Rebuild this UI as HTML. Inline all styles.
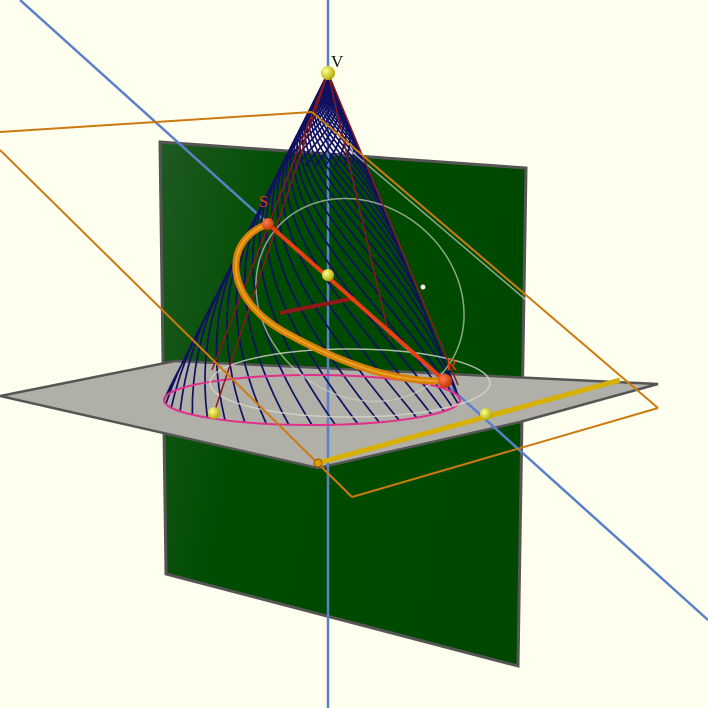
<!DOCTYPE html>
<html><head><style>html,body{margin:0;padding:0;background:#fffff0}svg{display:block}</style></head><body>
<svg id="s" width="708" height="708" viewBox="0 0 708 708" xmlns="http://www.w3.org/2000/svg">
<defs>
<linearGradient id="g" x1="0" y1="0" x2="1" y2="0.3"><stop offset="0" stop-color="#1f5a22"/><stop offset="0.35" stop-color="#004c00"/><stop offset="1" stop-color="#004800"/></linearGradient>
<radialGradient id="y" cx="0.35" cy="0.35" r="0.7"><stop offset="0" stop-color="#ffff90"/><stop offset="1" stop-color="#b0a800"/></radialGradient>
<radialGradient id="r" cx="0.35" cy="0.35" r="0.7"><stop offset="0" stop-color="#ff8050"/><stop offset="1" stop-color="#c03000"/></radialGradient>
</defs>
<rect width="708" height="708" fill="#fffff0"/>
<polygon points="160,142 526,168 518,666 166,574" fill="url(#g)" stroke="#555" stroke-width="3"/>
<polygon points="0,396 175,361 658,384 520,422 318,468" fill="#b0afa8" stroke="#555" stroke-width="2.5"/>
<line x1="328" y1="0" x2="328" y2="708" stroke="#5a80c8" stroke-width="2.5"/>
<line x1="20" y1="0" x2="708" y2="620" stroke="#5a80c8" stroke-width="2.5"/>
<g id="mesh" fill="none" stroke="#101060" stroke-width="1.7"></g>
<ellipse cx="312" cy="400" rx="148" ry="25" fill="none" stroke="#e0308a" stroke-width="2"/>
<ellipse cx="350" cy="383" rx="140" ry="34" fill="none" stroke="#d8d8d0" stroke-width="1.5" opacity="0.8"/>
<ellipse cx="360" cy="300" rx="95" ry="110" transform="rotate(-50 360 300)" fill="none" stroke="#c8d0c0" stroke-width="1.5" opacity="0.7"/>
<line x1="350" y1="150" x2="526" y2="300" stroke="#c8d0c0" stroke-width="1.5" opacity="0.7"/>
<g stroke="#8a1a1a" stroke-width="1.5" fill="none">
<line x1="328" y1="73" x2="214" y2="413"/><line x1="328" y1="73" x2="458" y2="385"/>
<line x1="328" y1="73" x2="212" y2="370"/><line x1="328" y1="73" x2="390" y2="340"/>
</g>
<line x1="0" y1="150" x2="352" y2="497" stroke="#cc7a10" stroke-width="2"/>
<line x1="0" y1="132" x2="312" y2="112" stroke="#cc7a10" stroke-width="2"/>
<line x1="312" y1="112" x2="658" y2="408" stroke="#cc7a10" stroke-width="2"/>
<line x1="658" y1="408" x2="352" y2="497" stroke="#cc7a10" stroke-width="2"/>
<line x1="280" y1="313" x2="355" y2="298" stroke="#901818" stroke-width="4"/>
<path d="M268,224 C222,240 222,300 290,335 C350,368 400,382 445,381" fill="none" stroke="#d88000" stroke-width="7"/>
<path d="M268,224 C222,240 222,300 290,335 C350,368 400,382 445,381" fill="none" stroke="#f0b040" stroke-width="2" opacity="0.7"/>
<line x1="268" y1="224" x2="445" y2="381" stroke="#e84010" stroke-width="4"/>
<line x1="318" y1="463" x2="620" y2="380" stroke="#d8b000" stroke-width="5"/>
<circle cx="328" cy="73" r="7" fill="url(#y)"/>
<circle cx="328" cy="275" r="6" fill="url(#y)"/>
<circle cx="214" cy="413" r="6" fill="url(#y)"/>
<circle cx="486" cy="414" r="6" fill="url(#y)"/>
<circle cx="268" cy="224" r="6" fill="url(#r)"/>
<circle cx="445" cy="381" r="7" fill="url(#r)"/>
<circle cx="318" cy="463" r="4" fill="#d8a000" stroke="#a05000"/>
<circle cx="423" cy="287" r="2.5" fill="#eee"/>
<text x="331" y="67" font-family="Liberation Serif,serif" font-size="17" fill="#111">V</text>
<text x="259" y="207" font-family="Liberation Serif,serif" font-size="17" fill="#e84010">S</text>
<text x="446" y="370" font-family="Liberation Serif,serif" font-size="17" fill="#e84010">R</text>
</svg>
<script>
var m=document.getElementById('mesh'),d='';
function P(h,f){return [328+h*(-16+148*Math.cos(f)),73+h*(327+25*Math.sin(f))];}
var fams=[[-1.6,40],[1.6,24]];
for(var fi=0;fi<2;fi++){var c=fams[fi][0];
for(var k=0;k<fams[fi][1];k++){var f0=2*Math.PI*k/fams[fi][1];var pen=false;
for(var s=0;s<=100;s++){var h=Math.pow(0.012,1-s/100);var f=f0+c*Math.log(h);
var vis=Math.sin(f)>-0.25; if(fi==1&&h>0.27)vis=false;
var p=P(h,f);
if(vis){d+=(pen?'L':'M')+p[0].toFixed(1)+','+p[1].toFixed(1)+' ';pen=true;}else pen=false;}}}
var p=document.createElementNS('http://www.w3.org/2000/svg','path');p.setAttribute('d',d);m.appendChild(p);
</script>
</body></html>
